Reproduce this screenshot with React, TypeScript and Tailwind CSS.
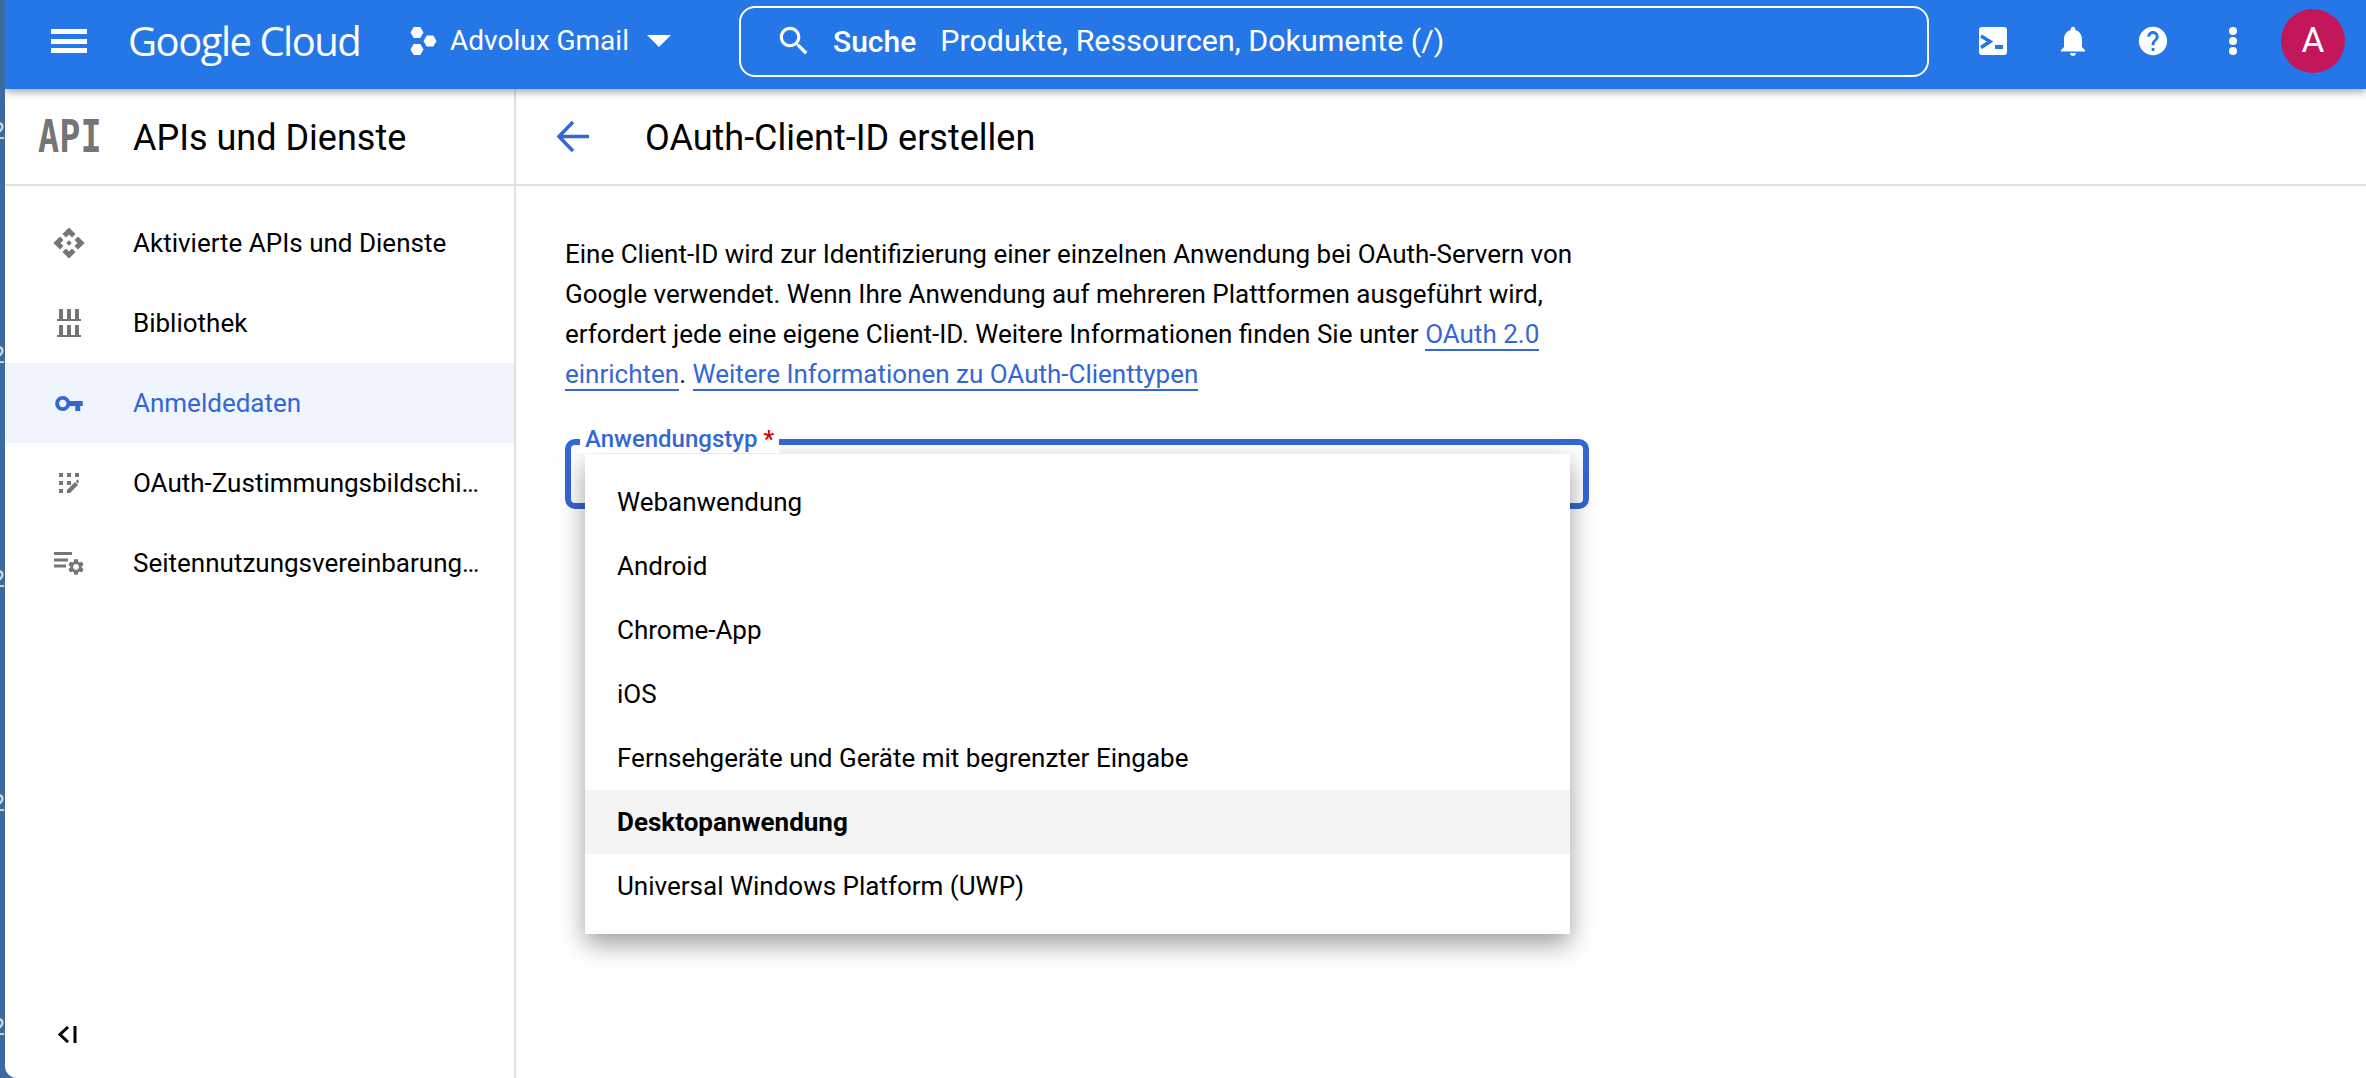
const navItems = [
  { label: 'Aktivierte APIs und Dienste', icon: <ApisIcon /> },
  { label: 'Bibliothek', icon: <LibraryIcon /> },
  { label: 'Anmeldedaten', icon: <KeyIcon />, active: true },
  { label: 'OAuth-Zustimmungsbildschirm', icon: <ConsentIcon /> },
  { label: 'Seitennutzungsvereinbarungen', icon: <PageSettingsIcon /> },
];

const appTypes = [
  'Webanwendung',
  'Android',
  'Chrome-App',
  'iOS',
  'Fernsehgeräte und Geräte mit begrenzter Eingabe',
  'Desktopanwendung',
  'Universal Windows Platform (UWP)',
];

function ApisIcon() {
  return (
    <svg viewBox="0 0 24 24" className="h-[34px] w-[34px] fill-[#757575]">
      <path d="M14 12l-2 2-2-2 2-2 2 2zm-2-6l2.120 2.120 2.500-2.500L12 1 7.380 5.620l2.500 2.500L12 6zm-6 6l2.120-2.120-2.500-2.500L1 12l4.620 4.620 2.500-2.500L6 12zm12 0l-2.120 2.120 2.500 2.500L23 12l-4.620-4.620-2.500 2.500L18 12zm-6 6l-2.120-2.120-2.500 2.500L12 23l4.620-4.620-2.500-2.500L12 18z" />
    </svg>
  );
}

function LibraryIcon() {
  return (
    <svg viewBox="0 0 24 28" className="h-7 w-6 fill-[#757575]">
      <path d="M0 10h24v2H0zM0 26h24v2H0zM2 0h4v10H2zM10 0h4v10h-4zM18 0h4v10h-4zM2 16h4v10H2zM10 16h4v10h-4zM18 16h4v10h-4z" />
    </svg>
  );
}

function KeyIcon() {
  return (
    <svg viewBox="1 6 22 12" className="h-[15px] w-7 fill-[#3367d6]">
      <path d="M12.650 10C11.830 7.670 9.610 6 7 6c-3.310 0-6 2.690-6 6s2.690 6 6 6c2.610 0 4.830-1.670 5.650-4H17v4h4v-4h2v-4H12.650zM7 15c-1.660 0-3-1.340-3-3s1.340-3 3-3 3 1.340 3 3-1.340 3-3 3z" />
    </svg>
  );
}

function ConsentIcon() {
  return (
    <svg viewBox="0 0 20 20" className="h-5 w-5 fill-[#757575]">
      <path d="M0 0h4v4H0zM8 0h4v4H8zM16 0h4v4h-4zM0 8h4v4H0zM8 8h4v4H8zM0 16h4v4H0zM8 20v-3l8-8 3 3-8 8zM17 8l1.500-1.500 1.500 1.500-1.500 3z" />
    </svg>
  );
}

function PageSettingsIcon() {
  return (
    <svg viewBox="0 0 30 23" className="h-[23px] w-[30px] fill-[#757575]">
      <path d="M0 0h18v3H0zM0 6.500h14v3H0zM0 12.500h12v3H0z" />
      <path
        transform="translate(12.400 5.400) scale(0.8)"
        d="M19.140 12.940c.04-.3.06-.61.06-.94 0-.32-.02-.64-.07-.94l2.030-1.580c.18-.14.23-.41.12-.61l-1.920-3.320c-.12-.22-.37-.29-.59-.22l-2.390.96c-.5-.38-1.030-.7-1.620-.94l-.36-2.540c-.04-.24-.24-.41-.48-.41h-3.840c-.24 0-.43.17-.47.41l-.36 2.540c-.59.24-1.130.57-1.620.94l-2.390-.96c-.22-.08-.47 0-.59.22L2.740 8.870c-.12.21-.08.47.12.61l2.030 1.580c-.05.3-.09.63-.09.94s.02.64.07.94l-2.030 1.580c-.18.14-.23.41-.12.61l1.920 3.320c.12.22.37.29.59.22l2.390-.96c.5.38 1.030.7 1.620.94l.36 2.540c.05.24.24.41.48.41h3.840c.24 0 .44-.17.47-.41l.36-2.540c.59-.24 1.130-.56 1.620-.94l2.390.96c.22.08.47 0 .59-.22l1.920-3.320c.12-.22.07-.47-.12-.61l-2.010-1.580zM12 15.600c-1.980 0-3.600-1.620-3.600-3.600s1.620-3.600 3.600-3.600 3.600 1.620 3.600 3.600-1.620 3.600-3.600 3.600z"
      />
    </svg>
  );
}

function ApiBadge() {
  return (
    <div className="w-[64px] origin-left scale-x-[0.8] font-['DejaVu_Sans_Mono',monospace] text-[44px] font-bold leading-none text-[#757575]">
      API
    </div>
  );
}

function HeaderBar() {
  return (
    <header className="z-20 flex h-[89px] shrink-0 items-center whitespace-nowrap bg-[#2577e7] pb-[7px] text-white shadow-[0_3px_8px_rgba(0,0,0,0.35)]">
      <div className="ml-[46px] flex h-[24px] w-[36px] shrink-0 flex-col justify-between">
        <span className="h-[5px] bg-white" />
        <span className="h-[5px] bg-white" />
        <span className="h-[5px] bg-white" />
      </div>
      <div className="ml-[41px] w-[232px] shrink-0 font-['Open_Sans',sans-serif] text-[40px] leading-none tracking-[-1.5px]">
        Google Cloud
      </div>
      <svg viewBox="0 0 27 28" className="ml-[50px] h-7 w-[27px] shrink-0 fill-white">
        <path d="M3.700 0h6.600l3.200 5.500-3.200 5.500H3.700L.5 5.500zM16.700 8.500h6.600l3.200 5.500-3.200 5.500h-6.600L13.500 14zM3.700 17h6.600l3.200 5.500-3.200 5.500H3.700L.5 22.500z" />
      </svg>
      <span className="ml-[13px] w-[177px] shrink-0 text-[28px]">Advolux Gmail</span>
      <span className="ml-[20px] h-0 w-0 shrink-0 border-x-[12px] border-t-[12px] border-x-transparent border-t-white" />
      <div className="ml-[68px] flex h-[71px] w-[1190px] shrink-0 items-center rounded-[16px] border-2 border-white pl-[34px]">
        <svg viewBox="0 0 24 24" className="h-[38px] w-[38px] fill-white">
          <path d="M15.500 14h-.79l-.28-.27C15.410 12.590 16 11.110 16 9.500 16 5.910 13.090 3 9.500 3S3 5.910 3 9.500 5.910 16 9.500 16c1.610 0 3.090-.59 4.230-1.570l.27.28v.79l5 4.990L20.490 19l-4.990-5zm-6 0C7.010 14 5 11.990 5 9.500S7.010 5 9.500 5 14 7.010 14 9.500 11.990 14 9.500 14z" />
        </svg>
        <span className="ml-[20px] text-[30px] font-medium">Suche</span>
        <span className="ml-[24px] text-[30.400px]">Produkte, Ressourcen, Dokumente (/)</span>
      </div>
      <div className="ml-[24px] flex w-20 shrink-0 justify-center">
        <svg viewBox="0 0 28 28" className="h-7 w-7">
          <rect width="28" height="28" rx="3" fill="white" />
          <path d="M2 9l9 5.500-9 6" fill="none" stroke="#2577e7" strokeWidth="3.500" />
          <rect x="16" y="18" width="8" height="4" fill="#2577e7" />
        </svg>
      </div>
      <div className="flex w-20 shrink-0 justify-center">
        <svg viewBox="0 0 24 24" className="h-9 w-9 fill-white">
          <path d="M12 22c1.100 0 2-.9 2-2h-4c0 1.100.89 2 2 2zm6-6v-5c0-3.070-1.640-5.640-4.500-6.320V4c0-.83-.67-1.500-1.500-1.500s-1.500.67-1.500 1.500v.68C7.630 5.360 6 7.920 6 11v5l-2 2v1h16v-1l-2-2z" />
        </svg>
      </div>
      <div className="flex w-20 shrink-0 justify-center">
        <svg viewBox="0 0 24 24" className="h-[34px] w-[34px] fill-white">
          <path d="M12 2C6.480 2 2 6.480 2 12s4.480 10 10 10 10-4.480 10-10S17.520 2 12 2zm1 17h-2v-2h2v2zm2.070-7.750l-.9.92C13.450 12.900 13 13.500 13 15h-2v-.5c0-1.100.45-2.100 1.170-2.830l1.240-1.260c.37-.36.59-.86.59-1.410 0-1.100-.9-2-2-2s-2 .9-2 2H8c0-2.210 1.790-4 4-4s4 1.790 4 4c0 .88-.36 1.680-.93 2.250z" />
        </svg>
      </div>
      <div className="flex w-20 shrink-0 flex-col items-center gap-[2px]">
        <span className="h-2 w-2 rounded-full bg-white" />
        <span className="h-2 w-2 rounded-full bg-white" />
        <span className="h-2 w-2 rounded-full bg-white" />
      </div>
      <div className="ml-2 flex h-16 w-16 shrink-0 items-center justify-center rounded-full bg-[#c2185b] text-[35px]">
        A
      </div>
    </header>
  );
}

function Sidebar() {
  return (
    <aside className="flex w-[511px] shrink-0 flex-col border-r-2 border-[#e0e0e0]">
      <div className="flex h-[97px] shrink-0 items-center border-b-2 border-[#e0e0e0] pl-[33px]">
        <ApiBadge />
        <h1 className="ml-[31px] pt-[2px] text-[36px] leading-none text-black">APIs und Dienste</h1>
      </div>
      <nav className="flex flex-col pt-[17px]">
        {navItems.map((item) => (
          <div
            key={item.label}
            className={`flex h-20 items-center ${item.active ? 'bg-[#eff4fd] text-[#3367d6]' : 'text-black'}`}
          >
            <div className="flex w-[128px] shrink-0 justify-center">{item.icon}</div>
            <span className="truncate pr-[34px] text-[26px]">{item.label}</span>
          </div>
        ))}
      </nav>
      <div className="mt-auto pb-[35px] pl-[53px]">
        <svg viewBox="0 0 19 17" className="h-[17px] w-[19px] fill-none stroke-black stroke-[3]">
          <path d="M10 1L2 8.500l8 7.500" />
          <path d="M17 0v17" />
        </svg>
      </div>
    </aside>
  );
}

function TypeDropdown() {
  return (
    <div className="relative mt-[45px] h-[70px] w-[1024px] rounded-[10px] border-[6px] border-[#3367d6]">
      <div className="absolute -top-[20px] left-[9px] z-10 bg-white px-[5px] text-[24px] font-medium leading-[28px] text-[#3367d6]">
        Anwendungstyp <span className="text-[#d50000]">*</span>
      </div>
      <ul className="absolute left-[14px] top-[9px] w-[985px] bg-white py-4 text-[26px] text-black shadow-[0_10px_24px_rgba(0,0,0,0.38)]">
        {appTypes.map((type) => (
          <li
            key={type}
            className={`flex h-16 items-center pl-[32px] ${type === 'Desktopanwendung' ? 'bg-[#f4f4f4] font-bold' : ''}`}
          >
            {type}
          </li>
        ))}
      </ul>
    </div>
  );
}

export default function App() {
  const linkClass = 'border-b-2 border-[#3367d6] text-[#3367d6]';

  return (
    <div className="flex h-[1078px] w-[2366px] overflow-hidden bg-[#3b6aa0] font-['Roboto',sans-serif]">
      <div className="flex w-[5px] shrink-0 flex-col items-end gap-[200px] overflow-hidden pt-[119px] text-[24px] leading-[24px] text-[#d8d8d8]">
        <span>2</span>
        <span>2</span>
        <span>2</span>
        <span>2</span>
        <span>2</span>
      </div>
      <div className="flex min-w-0 flex-1 flex-col overflow-hidden rounded-bl-[12px] bg-white">
        <HeaderBar />
        <div className="flex min-h-0 flex-1">
          <Sidebar />
          <main className="min-w-0 flex-1">
            <div className="flex h-[97px] items-center border-b-2 border-[#e0e0e0] pl-[41px]">
              <svg viewBox="0 0 32 31" className="h-[31px] w-8 fill-none stroke-[#3367d6] stroke-[3.5]">
                <path d="M32 15.500H3M16 1L2 15.500 16 30" />
              </svg>
              <h2 className="ml-[56px] pt-[2px] text-[36px] leading-none text-black">OAuth-Client-ID erstellen</h2>
            </div>
            <div className="pl-[49px] pt-[48px]">
              <p className="w-[1024px] text-[26px] leading-[40px] text-black">
                Eine Client-ID wird zur Identifizierung einer einzelnen Anwendung bei OAuth-Servern von Google verwendet. Wenn Ihre Anwendung auf mehreren Plattformen ausgeführt wird, erfordert jede eine eigene Client-ID. Weitere Informationen finden Sie unter{' '}
                <span className={linkClass}>OAuth 2.0 einrichten</span>. <span className={linkClass}>Weitere Informationen zu OAuth-Clienttypen</span>
              </p>
              <TypeDropdown />
            </div>
          </main>
        </div>
      </div>
    </div>
  );
}
